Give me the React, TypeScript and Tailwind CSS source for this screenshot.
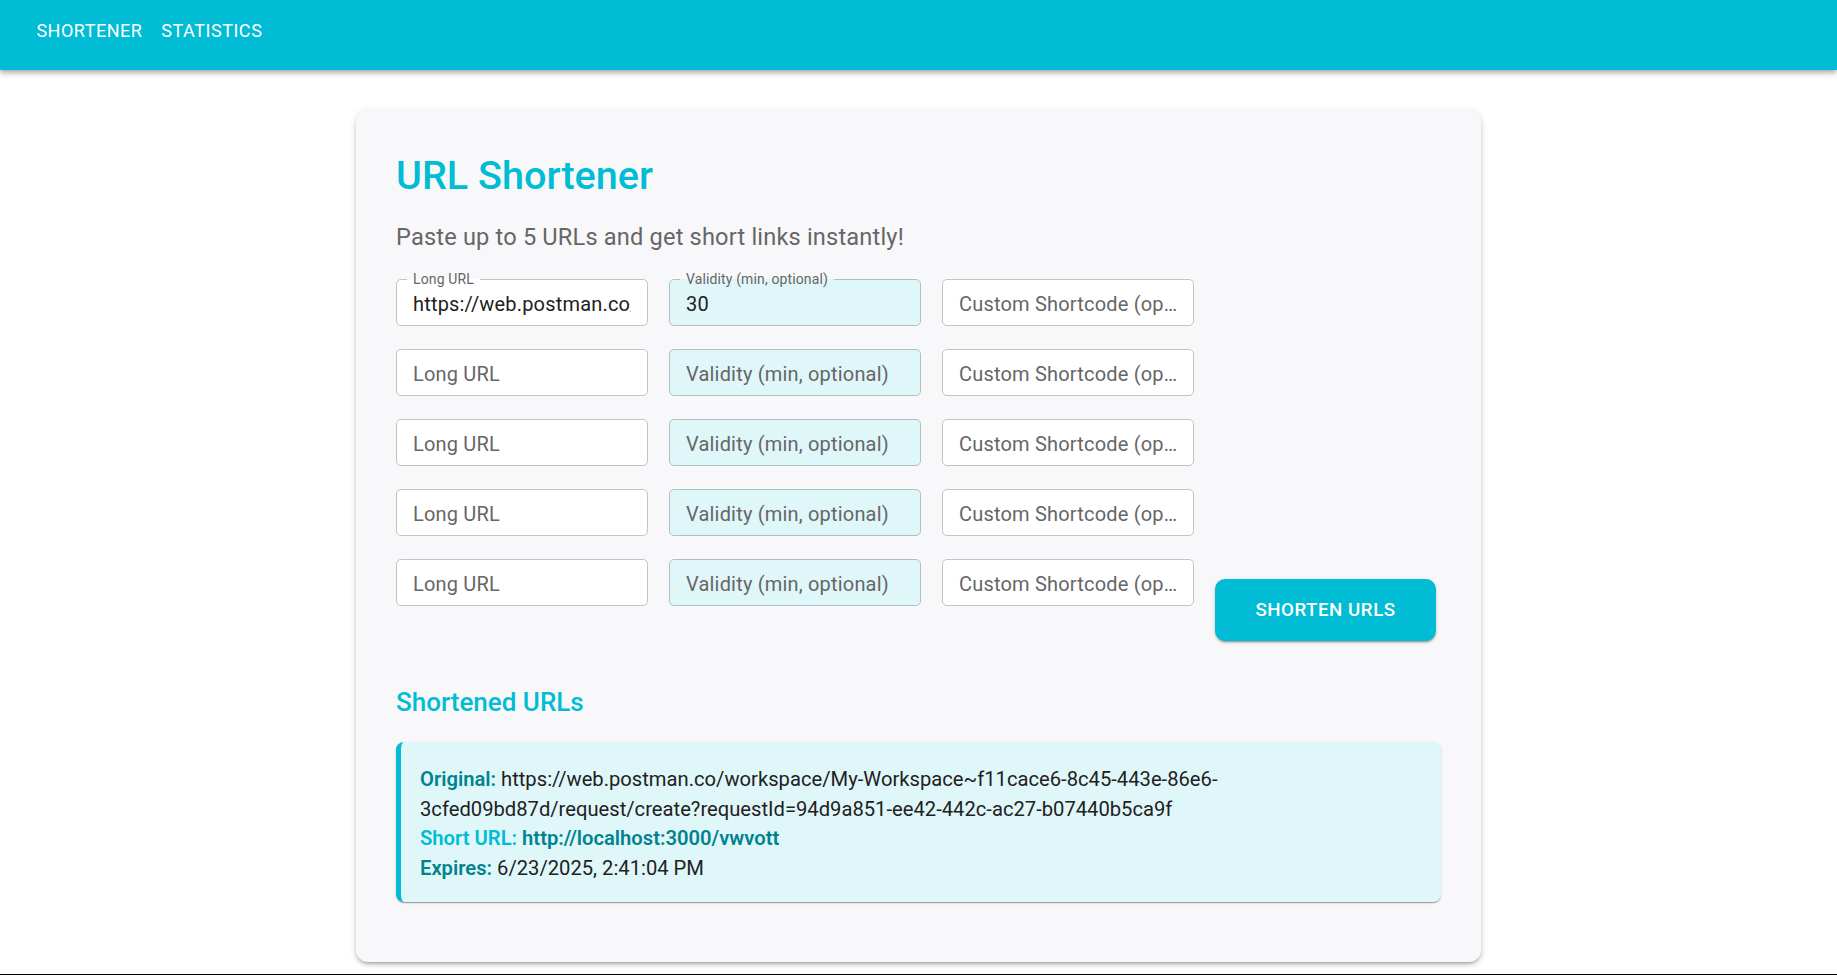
import React from 'react';

const longUrl =
  'https://web.postman.co/workspace/My-Workspace~f11cace6-8c45-443e-86e6-3cfed09bd87d/request/create?requestId=94d9a851-ee42-442c-ac27-b07440b5ca9f';

const rows = [
  { url: longUrl, validity: '30', code: '' },
  { url: '', validity: '', code: '' },
  { url: '', validity: '', code: '' },
  { url: '', validity: '', code: '' },
  { url: '', validity: '', code: '' },
];

type FieldProps = { label: string; value: string; tinted?: boolean };

const Field = ({ label, value, tinted }: FieldProps) => {
  const filled = value !== '';
  return (
    <div
      className={`relative h-[47px] rounded-[5px] border ${
        tinted ? 'border-[#aec2c5] bg-[#e0f7fa]' : 'border-[#c4c4c4] bg-white'
      }`}
    >
      {filled && (
        <span
          className={`absolute -top-[9px] left-[10px] px-[6px] text-[14px] leading-[16px] tracking-[0.00938em] text-[#666] ${
            tinted
              ? 'bg-[linear-gradient(to_bottom,#f8f8fa_50%,#e0f7fa_50%)]'
              : 'bg-[linear-gradient(to_bottom,#f8f8fa_50%,#ffffff_50%)]'
          }`}
        >
          {label}
        </span>
      )}
      {filled ? (
        <input
          readOnly
          value={value}
          className="block h-full w-full bg-transparent px-[16px] pt-[3px] text-[20px] tracking-[0.00938em] text-[#212121] outline-none"
        />
      ) : (
        <div className="flex h-full items-center pl-[16px] pr-[12px] pt-[2px]">
          <span className="block truncate text-[20px] tracking-[0.00938em] text-[#666]">{label}</span>
        </div>
      )}
    </div>
  );
};

const App = () => {
  return (
    <div className="flex h-[975px] flex-col overflow-hidden bg-white [font-family:Roboto,sans-serif]">
      <header className="relative z-10 h-[70px] shrink-0 bg-[#00bcd4] shadow-[0_2px_4px_-1px_rgba(0,0,0,0.2),0_4px_5px_0_rgba(0,0,0,0.14),0_1px_10px_0_rgba(0,0,0,0.12)]">
        <nav className="flex h-[61px] items-center px-[27px]">
          <button className="px-[9.4px] py-[7px] text-[18px] leading-[1.75] tracking-[0.02857em] text-white">
            SHORTENER
          </button>
          <button className="px-[9.4px] py-[7px] text-[18px] leading-[1.75] tracking-[0.03em] text-white">
            STATISTICS
          </button>
        </nav>
      </header>

      <main className="flex-1">
        <div className="mx-auto mt-[41px] w-[1125px] rounded-[12px] bg-[#f8f8fa] px-[40px] pt-[40px] pb-[60px] shadow-[0_3px_3px_-2px_rgba(0,0,0,0.2),0_3px_4px_0_rgba(0,0,0,0.14),0_1px_8px_0_rgba(0,0,0,0.12)]">
          <h1 className="text-[39.6px] leading-[49.4px] font-medium text-[#00bcd4]">URL Shortener</h1>
          <p className="mt-[18.7px] text-[23.6px] leading-[37.4px] tracking-[0.0075em] text-[#666]">
            Paste up to 5 URLs and get short links instantly!
          </p>

          <div className="mt-[22.5px] grid grid-cols-[252px_252px_252px_221px] items-start gap-x-[21px] gap-y-[23px]">
            {rows.map((row, i) => (
              <React.Fragment key={i}>
                <Field label="Long URL" value={row.url} />
                <Field label="Validity (min, optional)" value={row.validity} tinted />
                <Field label="Custom Shortcode (optional)" value={row.code} />
                {i === rows.length - 1 ? (
                  <button className="mt-[20px] h-[62px] w-[221px] rounded-[10px] bg-[#00bcd4] text-[18.7px] font-medium tracking-[0.02857em] text-white shadow-[0_3px_1px_-2px_rgba(0,0,0,0.2),0_2px_2px_0_rgba(0,0,0,0.14),0_1px_5px_0_rgba(0,0,0,0.12)]">
                    SHORTEN URLS
                  </button>
                ) : (
                  <div />
                )}
              </React.Fragment>
            ))}
          </div>

          <h2 className="mt-[41px] text-[26px] leading-[40px] font-medium text-[#00bcd4]">Shortened URLs</h2>

          <div className="mt-[20px] rounded-[8px] border-l-[5px] border-[#00bcd4] bg-[#e0f7fa] px-[19px] pt-[23px] pb-[19px] text-[20.2px] leading-[29.6px] text-[#212121] shadow-[0_2px_1px_-1px_rgba(0,0,0,0.2),0_1px_1px_0_rgba(0,0,0,0.14),0_1px_3px_0_rgba(0,0,0,0.12)]">
            <p>
              <span className="font-semibold text-[#00838f]">Original:</span>{' '}
              https://web.postman.co/workspace/My-Workspace~f11cace6-8c45-443e-86e6-
              <br />
              3cfed09bd87d/request/create?requestId=94d9a851-ee42-442c-ac27-b07440b5ca9f
            </p>
            <p>
              <span className="font-semibold text-[#00bcd4]">Short URL:</span>{' '}
              <a className="font-semibold text-[#00838f]">http://localhost:3000/vwvott</a>
            </p>
            <p>
              <span className="font-semibold text-[#00838f]">Expires:</span> 6/23/2025, 2:41:04 PM
            </p>
          </div>
        </div>
      </main>

      <div className="h-px shrink-0 bg-black" />
    </div>
  );
};

export default App;
